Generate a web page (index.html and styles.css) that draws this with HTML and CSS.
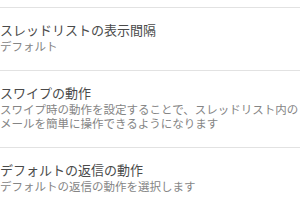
FILE: index.html
```html
<!DOCTYPE html>
<html lang="ja">
<head>
    <meta charset="UTF-8">
    <meta name="viewport" content="width=device-width, initial-scale=1.0">
    <title>設定</title>
    <link rel="stylesheet" href="styles.css">
</head>
<body>
    <div class="settings-list">
        <div class="setting-item">
            <div class="setting-title">スレッドリストの表示間隔</div>
            <div class="setting-summary">デフォルト</div>
        </div>
        <div class="setting-item">
            <div class="setting-title">スワイプの動作</div>
            <div class="setting-summary">スワイプ時の動作を設定することで、スレッドリスト内のメールを簡単に操作できるようになります</div>
        </div>
        <div class="setting-item">
            <div class="setting-title">デフォルトの返信の動作</div>
            <div class="setting-summary">デフォルトの返信の動作を選択します</div>
        </div>
    </div>
</body>
</html>
```

FILE: styles.css
```css
* {
    margin: 0;
    padding: 0;
    box-sizing: border-box;
}

body {
    font-family: "Noto Sans CJK JP", "Noto Sans", sans-serif;
    background-color: #fff;
    overflow: hidden;
}

.settings-list {
    margin-top: 7px;
    border-top: 1px solid #e2e2e2;
}

.setting-item {
    padding: 12px 0 17px;
    border-bottom: 1px solid #e2e2e2;
}

.setting-title {
    font-size: 13px;
    line-height: 19px;
    color: #4a4a4a;
}

.setting-summary {
    font-size: 11.5px;
    line-height: 14px;
    color: #858585;
    width: 304px;
}
```
